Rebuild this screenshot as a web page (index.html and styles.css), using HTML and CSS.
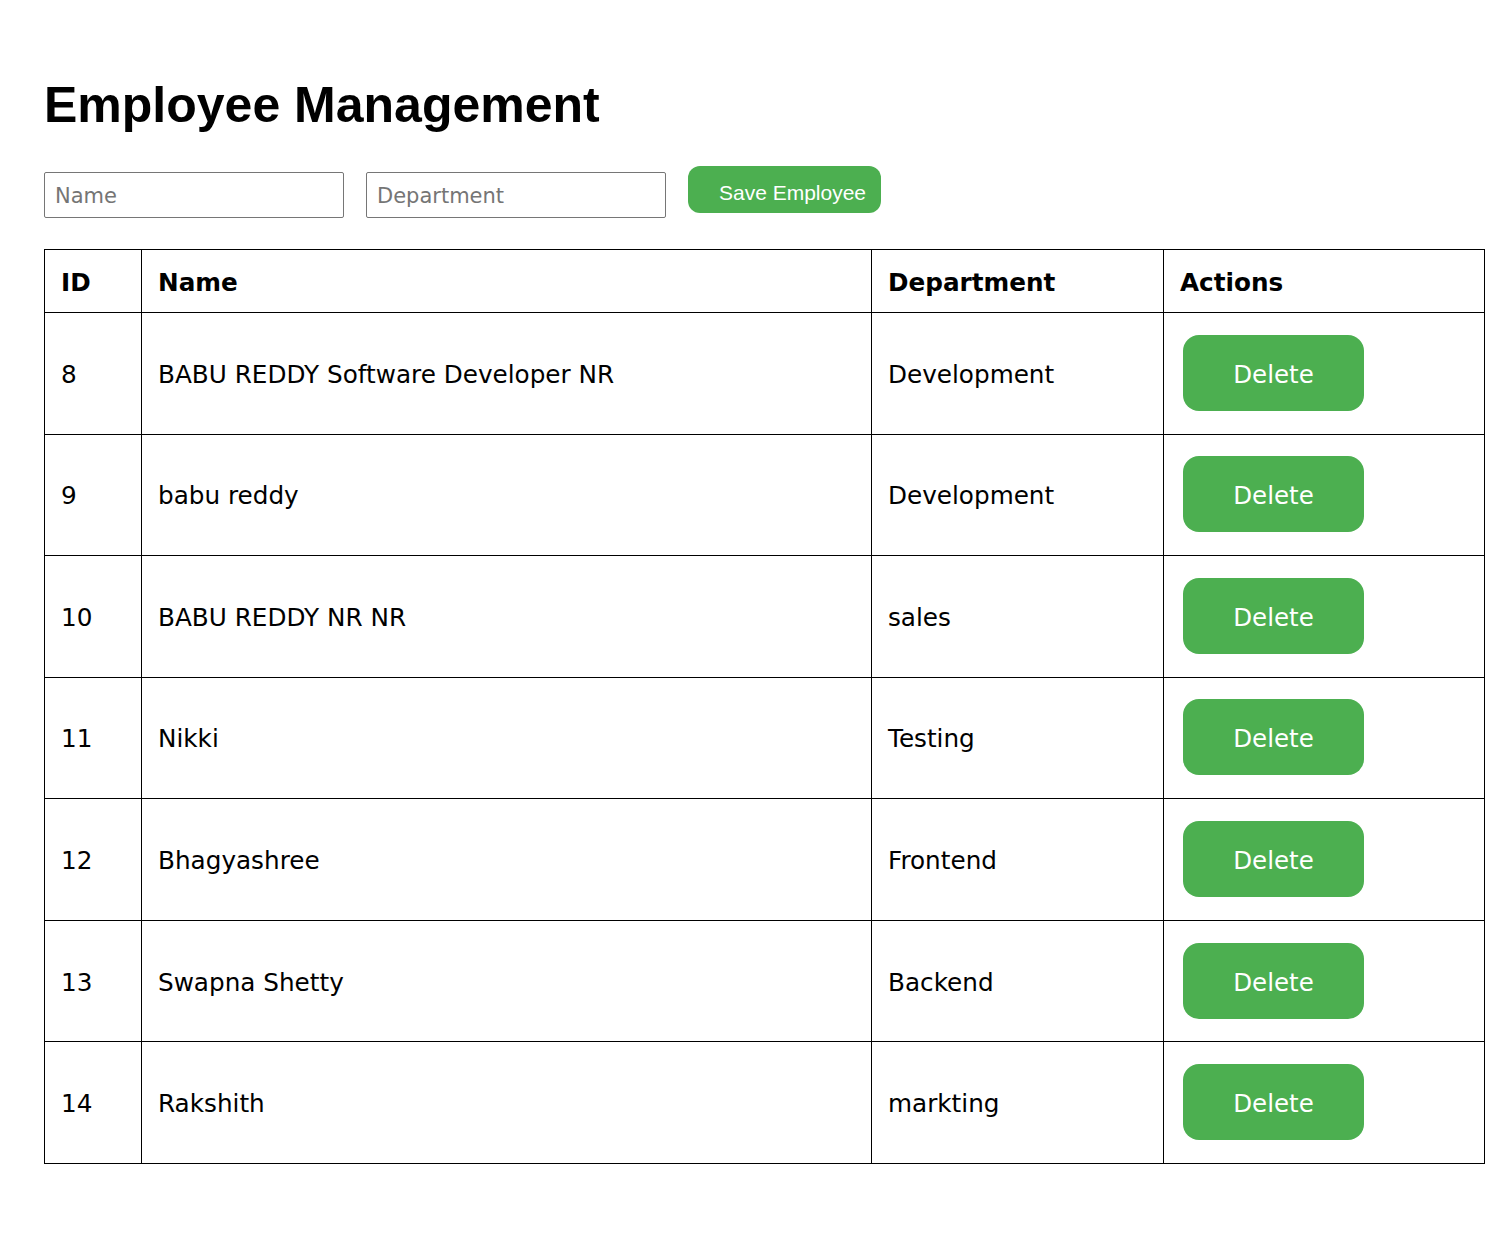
FILE: index.html
```html
<!DOCTYPE html>
<html>
<head>
<meta charset="utf-8">
<link rel="stylesheet" href="styles.css">
</head>
<body>
<div class="page">
  <h1 class="title">Employee Management</h1>
  <form class="form">
    <input class="field" type="text" placeholder="Name">
    <input class="field" type="text" placeholder="Department">
    <button class="save" type="button">Save Employee</button>
  </form>
  <table class="grid">
    <colgroup>
      <col class="c-id"><col class="c-name"><col class="c-dept"><col class="c-act">
    </colgroup>
    <thead>
      <tr><th>ID</th><th>Name</th><th>Department</th><th>Actions</th></tr>
    </thead>
    <tbody>
      <tr><td>8</td><td>BABU REDDY Software Developer NR</td><td>Development</td><td><button class="del" type="button">Delete</button></td></tr>
      <tr><td>9</td><td>babu reddy</td><td>Development</td><td><button class="del" type="button">Delete</button></td></tr>
      <tr><td>10</td><td>BABU REDDY NR NR</td><td>sales</td><td><button class="del" type="button">Delete</button></td></tr>
      <tr><td>11</td><td>Nikki</td><td>Testing</td><td><button class="del" type="button">Delete</button></td></tr>
      <tr><td>12</td><td>Bhagyashree</td><td>Frontend</td><td><button class="del" type="button">Delete</button></td></tr>
      <tr><td>13</td><td>Swapna Shetty</td><td>Backend</td><td><button class="del" type="button">Delete</button></td></tr>
      <tr><td>14</td><td>Rakshith</td><td>markting</td><td><button class="del" type="button">Delete</button></td></tr>
    </tbody>
  </table>
</div>
</body>
</html>
```
FILE: styles.css
```css
html, body { margin: 0; padding: 0; background: #fff; }
body { font-family: "DejaVu Sans", sans-serif; color: #000; }
.page { padding: 0 17px 0 44px; }
.title {
  font-family: "Liberation Sans", Arial, sans-serif;
  font-weight: bold;
  font-size: 50px;
  line-height: 56px;
  margin: 0;
  padding-top: 77px;
}
.form {
  display: flex;
  align-items: flex-start;
  gap: 22px;
  margin-top: 33px;
  height: 83px;
}
.field {
  box-sizing: border-box;
  width: 300px;
  height: 46px;
  margin-top: 6px;
  border: 1px solid #767676;
  border-radius: 2px;
  padding: 1px 10px 0;
  font-family: "DejaVu Sans", sans-serif;
  font-size: 21px;
  color: #000;
}
.field::placeholder { color: #757575; }
.save {
  box-sizing: border-box;
  height: 47px;
  width: 193px;
  border: none;
  border-radius: 12px;
  background: #4caf50;
  color: #fff;
  font-family: "Liberation Sans", Arial, sans-serif;
  font-size: 21px;
  padding: 6px 0 0 16px;
}
.grid {
  border-collapse: collapse;
  table-layout: fixed;
  width: 1441px;
  font-size: 24.7px;
}
.c-id { width: 97px; }
.c-name { width: 730px; }
.c-dept { width: 292px; }
.c-act { width: 321px; }
.grid th, .grid td {
  border: 1px solid #000;
  text-align: left;
  padding: 16px;
}
.grid th { height: 30px; font-weight: bold; padding-top: 17px; padding-bottom: 15px; }
.grid td { height: 88.57px; padding-top: 17px; padding-bottom: 15px; }
.del {
  box-sizing: border-box;
  width: 181px;
  height: 76px;
  margin: -3px 0 0 3px;
  border: none;
  border-radius: 16px;
  background: #4caf50;
  color: #fff;
  font-family: "DejaVu Sans", sans-serif;
  font-size: 24.5px;
  padding-top: 4px;
  display: block;
}
```
